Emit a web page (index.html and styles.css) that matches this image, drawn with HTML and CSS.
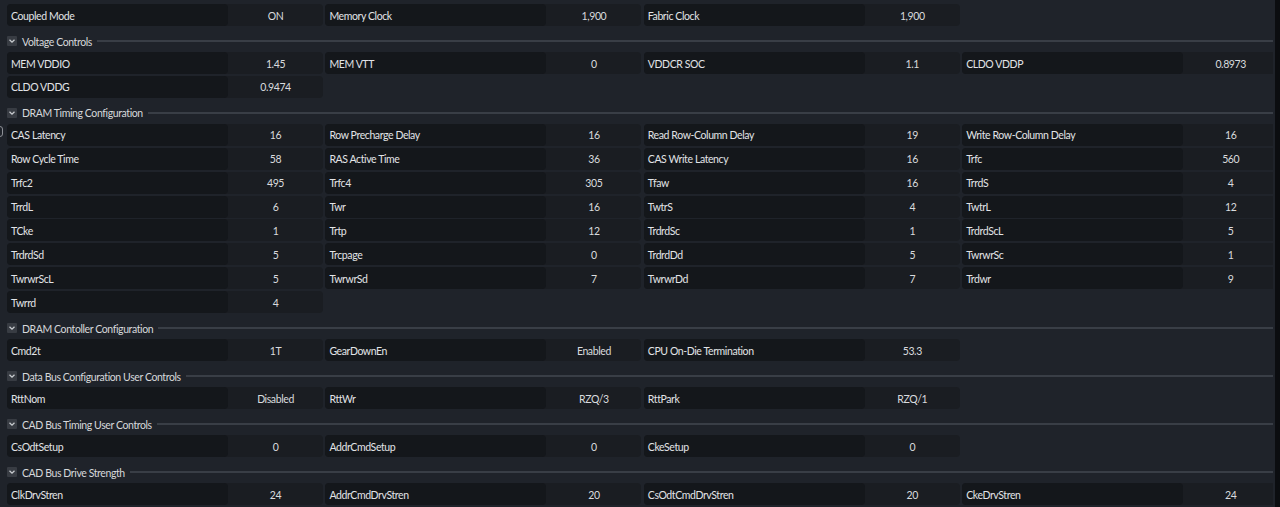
FILE: index.html
```html
<!DOCTYPE html>
<html lang="en">
<head>
<meta charset="utf-8">
<title>Memory Settings</title>
<link rel="stylesheet" href="styles.css">
</head>
<body>
<main class="panel">
  <span class="edge-mark"></span>
  <div class="grid">
    <div class="cell"><span class="label">Coupled Mode</span><span class="value">ON</span></div>
    <div class="cell"><span class="label">Memory Clock</span><span class="value">1,900</span></div>
    <div class="cell"><span class="label">Fabric Clock</span><span class="value">1,900</span></div>
  </div>

  <section class="group">
    <div class="group-head"><span class="chev"><svg viewBox="0 0 10 10" width="10" height="10"><path d="M2.5 3.8 L5 6.2 L7.5 3.8" fill="none" stroke="#c9ccd0" stroke-width="1.3"/></svg></span><span class="title">Voltage Controls</span><span class="rule"></span></div>
    <div class="grid">
      <div class="cell"><span class="label">MEM VDDIO</span><span class="value">1.45</span></div>
      <div class="cell"><span class="label">MEM VTT</span><span class="value">0</span></div>
      <div class="cell"><span class="label">VDDCR SOC</span><span class="value">1.1</span></div>
      <div class="cell"><span class="label">CLDO VDDP</span><span class="value">0.8973</span></div>
      <div class="cell"><span class="label">CLDO VDDG</span><span class="value">0.9474</span></div>
    </div>
  </section>

  <section class="group">
    <div class="group-head"><span class="chev"><svg viewBox="0 0 10 10" width="10" height="10"><path d="M2.5 3.8 L5 6.2 L7.5 3.8" fill="none" stroke="#c9ccd0" stroke-width="1.3"/></svg></span><span class="title">DRAM Timing Configuration</span><span class="rule"></span></div>
    <div class="grid">
      <div class="cell"><span class="label">CAS Latency</span><span class="value">16</span></div>
      <div class="cell"><span class="label">Row Precharge Delay</span><span class="value">16</span></div>
      <div class="cell"><span class="label">Read Row-Column Delay</span><span class="value">19</span></div>
      <div class="cell"><span class="label">Write Row-Column Delay</span><span class="value">16</span></div>
      <div class="cell"><span class="label">Row Cycle Time</span><span class="value">58</span></div>
      <div class="cell"><span class="label">RAS Active Time</span><span class="value">36</span></div>
      <div class="cell"><span class="label">CAS Write Latency</span><span class="value">16</span></div>
      <div class="cell"><span class="label">Trfc</span><span class="value">560</span></div>
      <div class="cell"><span class="label">Trfc2</span><span class="value">495</span></div>
      <div class="cell"><span class="label">Trfc4</span><span class="value">305</span></div>
      <div class="cell"><span class="label">Tfaw</span><span class="value">16</span></div>
      <div class="cell"><span class="label">TrrdS</span><span class="value">4</span></div>
      <div class="cell"><span class="label">TrrdL</span><span class="value">6</span></div>
      <div class="cell"><span class="label">Twr</span><span class="value">16</span></div>
      <div class="cell"><span class="label">TwtrS</span><span class="value">4</span></div>
      <div class="cell"><span class="label">TwtrL</span><span class="value">12</span></div>
      <div class="cell"><span class="label">TCke</span><span class="value">1</span></div>
      <div class="cell"><span class="label">Trtp</span><span class="value">12</span></div>
      <div class="cell"><span class="label">TrdrdSc</span><span class="value">1</span></div>
      <div class="cell"><span class="label">TrdrdScL</span><span class="value">5</span></div>
      <div class="cell"><span class="label">TrdrdSd</span><span class="value">5</span></div>
      <div class="cell"><span class="label">Trcpage</span><span class="value">0</span></div>
      <div class="cell"><span class="label">TrdrdDd</span><span class="value">5</span></div>
      <div class="cell"><span class="label">TwrwrSc</span><span class="value">1</span></div>
      <div class="cell"><span class="label">TwrwrScL</span><span class="value">5</span></div>
      <div class="cell"><span class="label">TwrwrSd</span><span class="value">7</span></div>
      <div class="cell"><span class="label">TwrwrDd</span><span class="value">7</span></div>
      <div class="cell"><span class="label">Trdwr</span><span class="value">9</span></div>
      <div class="cell"><span class="label">Twrrd</span><span class="value">4</span></div>
    </div>
  </section>

  <section class="group">
    <div class="group-head"><span class="chev"><svg viewBox="0 0 10 10" width="10" height="10"><path d="M2.5 3.8 L5 6.2 L7.5 3.8" fill="none" stroke="#c9ccd0" stroke-width="1.3"/></svg></span><span class="title">DRAM Contoller Configuration</span><span class="rule"></span></div>
    <div class="grid">
      <div class="cell"><span class="label">Cmd2t</span><span class="value">1T</span></div>
      <div class="cell"><span class="label">GearDownEn</span><span class="value">Enabled</span></div>
      <div class="cell"><span class="label">CPU On-Die Termination</span><span class="value">53.3</span></div>
    </div>
  </section>

  <section class="group">
    <div class="group-head"><span class="chev"><svg viewBox="0 0 10 10" width="10" height="10"><path d="M2.5 3.8 L5 6.2 L7.5 3.8" fill="none" stroke="#c9ccd0" stroke-width="1.3"/></svg></span><span class="title">Data Bus Configuration User Controls</span><span class="rule"></span></div>
    <div class="grid">
      <div class="cell"><span class="label">RttNom</span><span class="value">Disabled</span></div>
      <div class="cell"><span class="label">RttWr</span><span class="value">RZQ/3</span></div>
      <div class="cell"><span class="label">RttPark</span><span class="value">RZQ/1</span></div>
    </div>
  </section>

  <section class="group">
    <div class="group-head"><span class="chev"><svg viewBox="0 0 10 10" width="10" height="10"><path d="M2.5 3.8 L5 6.2 L7.5 3.8" fill="none" stroke="#c9ccd0" stroke-width="1.3"/></svg></span><span class="title">CAD Bus Timing User Controls</span><span class="rule"></span></div>
    <div class="grid">
      <div class="cell"><span class="label">CsOdtSetup</span><span class="value">0</span></div>
      <div class="cell"><span class="label">AddrCmdSetup</span><span class="value">0</span></div>
      <div class="cell"><span class="label">CkeSetup</span><span class="value">0</span></div>
    </div>
  </section>

  <section class="group">
    <div class="group-head"><span class="chev"><svg viewBox="0 0 10 10" width="10" height="10"><path d="M2.5 3.8 L5 6.2 L7.5 3.8" fill="none" stroke="#c9ccd0" stroke-width="1.3"/></svg></span><span class="title">CAD Bus Drive Strength</span><span class="rule"></span></div>
    <div class="grid">
      <div class="cell"><span class="label">ClkDrvStren</span><span class="value">24</span></div>
      <div class="cell"><span class="label">AddrCmdDrvStren</span><span class="value">20</span></div>
      <div class="cell"><span class="label">CsOdtCmdDrvStren</span><span class="value">20</span></div>
      <div class="cell"><span class="label">CkeDrvStren</span><span class="value">24</span></div>
    </div>
  </section>
</main>
<div class="gutter"></div>
<div class="scrollbar"></div>
</body>
</html>
```

FILE: styles.css
```css
html, body {
  margin: 0;
  padding: 0;
}

body {
  background: #1f232a;
  display: flex;
  height: 507px;
  overflow: hidden;
  font-family: Lato, "Liberation Sans", sans-serif;
  font-size: 10.5px;
  letter-spacing: -0.4px;
  color: #e2e4e7;
}

.panel {
  position: relative;
  width: 1273px;
  flex: none;
  overflow: hidden;
  box-sizing: border-box;
  padding: 4px 0 0 7px;
}

.gutter {
  width: 2px;
  flex: none;
}

.scrollbar {
  flex: 1;
  background: #0b0d10;
}

.grid {
  display: grid;
  grid-template-columns: repeat(4, 316px);
  column-gap: 2.4px;
  row-gap: 1.9px;
  width: max-content;
}

.cell {
  display: flex;
  height: 22px;
  background: #1a1d22;
  border-radius: 4px;
}

.label {
  width: 221px;
  flex: none;
  box-sizing: border-box;
  padding-left: 4px;
  padding-top: 1px;
  background: #14171b;
  border-radius: 4px;
  display: flex;
  align-items: center;
  white-space: nowrap;
}

.value {
  flex: 1;
  display: flex;
  align-items: center;
  justify-content: center;
  padding-top: 1px;
  color: #d9dbde;
}

.group-head {
  height: 26px;
  box-sizing: border-box;
  padding-top: 4px;
  display: flex;
  align-items: center;
}

.chev {
  width: 10px;
  height: 10px;
  flex: none;
  background: #383c43;
  border-radius: 1px;
  display: flex;
}

.title {
  margin-left: 5px;
  padding-top: 1px;
  color: #d6d8db;
  white-space: nowrap;
}

.rule {
  flex: 1;
  height: 2px;
  margin-left: 5px;
  background: #393e46;
}

.edge-mark {
  position: absolute;
  left: -3px;
  top: 126px;
  width: 4px;
  height: 9px;
  border: 1px solid #8d9096;
  border-radius: 4px;
}
```
